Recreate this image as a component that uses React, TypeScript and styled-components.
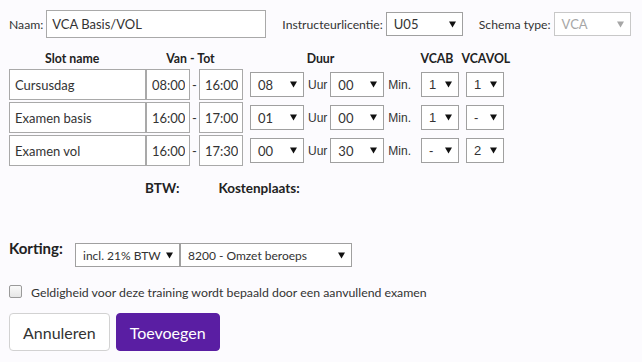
import React from "react";
import styled, { createGlobalStyle } from "styled-components";

const GlobalStyle = createGlobalStyle`
  html, body {
    margin: 0;
    padding: 0;
    background: #fcfbfe;
  }
  body {
    font-family: Lato, "Noto Sans", sans-serif;
    color: #333;
  }
`;

const Page = styled.div`
  width: 642px;
  height: 362px;
  padding: 10px 9px 0;
  box-sizing: border-box;
  display: flex;
  flex-direction: column;
  white-space: nowrap;
`;

const TopRow = styled.div`
  display: flex;
  align-items: center;
  height: 28px;
`;

const Label = styled.span<{ $ml?: number }>`
  font-size: 12.2px;
  color: #333;
  margin-left: ${(p) => p.$ml ?? 0}px;
  margin-right: 3px;
  flex-shrink: 0;
`;

const TextInput = styled.input<{ $w: number; $h?: number }>`
  width: ${(p) => p.$w}px;
  height: ${(p) => p.$h ?? 28}px;
  box-sizing: border-box;
  border: 1px solid #a9a9a9;
  background: #fff;
  padding: 0 4px 0 5px;
  margin: 0;
  font-family: Lato, "Noto Sans", sans-serif;
  font-size: 13px;
  color: #333;
  outline: none;
  flex-shrink: 0;
`;

const SelectBox = styled.div<{
  $w: number;
  $h?: number;
  $fs?: number;
  $disabled?: boolean;
  $arial?: boolean;
}>`
  width: ${(p) => p.$w}px;
  height: ${(p) => p.$h ?? 25}px;
  box-sizing: border-box;
  border: 1px solid ${(p) => (p.$disabled ? "#c8c8c8" : "#a0a0a0")};
  background: #fff;
  display: flex;
  align-items: center;
  justify-content: space-between;
  padding: 0 6px 0 7px;
  font-family: ${(p) => (p.$arial ? '"Liberation Sans", Arial, sans-serif' : 'Lato, "Noto Sans", sans-serif')};
  font-size: ${(p) => p.$fs ?? 13}px;
  color: ${(p) => (p.$disabled ? "#a6a6a6" : "#333")};
  flex-shrink: 0;
  white-space: nowrap;
`;

const Arrow: React.FC<{ disabled?: boolean }> = ({ disabled }) => (
  <svg width="7" height="7" viewBox="0 0 7 7">
    <path d="M0 0.5 L7 0.5 L3.5 6.5 Z" fill={disabled ? "#a6a6a6" : "#111"} />
  </svg>
);

const Select: React.FC<{
  value: string;
  w: number;
  h?: number;
  fs?: number;
  disabled?: boolean;
  arial?: boolean;
}> = ({ value, w, h, fs, disabled, arial }) => (
  <SelectBox $w={w} $h={h} $fs={fs} $disabled={disabled} $arial={arial}>
    <span>{value}</span>
    <Arrow disabled={disabled} />
  </SelectBox>
);

const HeaderRow = styled.div`
  display: flex;
  margin-top: 12px;
  height: 16px;
  align-items: center;
`;

const HeaderCell = styled.span<{ $left: number }>`
  margin-left: ${(p) => p.$left}px;
  font-size: 12.3px;
  font-weight: 700;
  color: #222;
  flex-shrink: 0;
`;

const SlotList = styled.div`
  display: flex;
  flex-direction: column;
  gap: 2px;
  margin-top: 3px;
`;

const SlotRow = styled.div`
  display: flex;
  align-items: center;
  height: 31px;
`;

const Dash = styled.span`
  width: 9px;
  text-align: center;
  font-size: 13px;
  flex-shrink: 0;
`;

const Unit = styled.span<{ $ml: number; $mr: number }>`
  font-family: "Liberation Sans", Arial, sans-serif;
  font-size: 12px;
  color: #333;
  margin-left: ${(p) => p.$ml}px;
  margin-right: ${(p) => p.$mr}px;
  flex-shrink: 0;
`;

const Spacer = styled.span<{ $w: number }>`
  width: ${(p) => p.$w}px;
  flex-shrink: 0;
`;

const TotalsRow = styled.div`
  display: flex;
  margin-top: 14px;
  padding-left: 136px;
  gap: 39px;
`;

const TotalLabel = styled.span`
  font-size: 13.5px;
  font-weight: 700;
  color: #222;
`;

const KortingRow = styled.div`
  display: flex;
  align-items: flex-start;
  margin-top: 47px;
`;

const KortingLabel = styled.span`
  font-size: 15px;
  font-weight: 700;
  color: #222;
  width: 66px;
  margin-top: -4px;
  flex-shrink: 0;
`;

const CheckRow = styled.label`
  display: flex;
  align-items: center;
  margin-top: 18px;
  gap: 9px;
  font-size: 12.3px;
  color: #333;
`;

const CheckBox = styled.span`
  width: 11px;
  height: 11px;
  border: 1px solid #9a9a9a;
  border-radius: 2px;
  background: linear-gradient(#fafafa, #e6e6e6);
  margin-top: -2px;
  flex-shrink: 0;
`;

const ButtonRow = styled.div`
  display: flex;
  gap: 6px;
  margin-top: 13px;
`;

const Button = styled.button<{ $primary?: boolean }>`
  height: 38px;
  padding: 0 13px;
  border-radius: 4px;
  border: 1px solid ${(p) => (p.$primary ? "#5a1ea3" : "#d2d2d2")};
  background: ${(p) => (p.$primary ? "#5a1ea3" : "#fff")};
  color: ${(p) => (p.$primary ? "#fff" : "#333")};
  font-family: Lato, "Noto Sans", sans-serif;
  font-size: 16px;
`;

type Slot = {
  name: string;
  from: string;
  to: string;
  hours: string;
  mins: string;
  vcab: string;
  vcavol: string;
};

const slots: Slot[] = [
  { name: "Cursusdag", from: "08:00", to: "16:00", hours: "08", mins: "00", vcab: "1", vcavol: "1" },
  { name: "Examen basis", from: "16:00", to: "17:00", hours: "01", mins: "00", vcab: "1", vcavol: "-" },
  { name: "Examen vol", from: "16:00", to: "17:30", hours: "00", mins: "30", vcab: "-", vcavol: "2" },
];

export default function App() {
  return (
    <>
      <GlobalStyle />
      <Page>
        <TopRow>
          <Label>Naam:</Label>
          <TextInput $w={220} defaultValue="VCA Basis/VOL" />
          <Label $ml={16}>Instructeurlicentie:</Label>
          <Select value="U05" w={77} h={24} />
          <Label $ml={16}>Schema type:</Label>
          <Select value="VCA" w={77} h={24} disabled />
        </TopRow>

        <HeaderRow>
          <HeaderCell $left={36}>Slot name</HeaderCell>
          <HeaderCell $left={67}>Van - Tot</HeaderCell>
          <HeaderCell $left={92}>Duur</HeaderCell>
          <HeaderCell $left={86}>VCAB</HeaderCell>
          <HeaderCell $left={8}>VCAVOL</HeaderCell>
        </HeaderRow>

        <SlotList>
          {slots.map((s) => (
            <SlotRow key={s.name}>
              <TextInput $w={137} $h={31} defaultValue={s.name} />
              <TextInput $w={44} $h={31} defaultValue={s.from} />
              <Dash>-</Dash>
              <TextInput $w={44} $h={31} defaultValue={s.to} />
              <Spacer $w={7} />
              <Select value={s.hours} w={54} h={25} />
              <Unit $ml={4} $mr={3}>Uur</Unit>
              <Select value={s.mins} w={54} h={25} />
              <Unit $ml={4} $mr={10}>Min.</Unit>
              <Select value={s.vcab} w={38} h={25} arial />
              <Spacer $w={7} />
              <Select value={s.vcavol} w={38} h={25} arial />
            </SlotRow>
          ))}
        </SlotList>

        <TotalsRow>
          <TotalLabel>BTW:</TotalLabel>
          <TotalLabel>Kostenplaats:</TotalLabel>
        </TotalsRow>

        <KortingRow>
          <KortingLabel>Korting:</KortingLabel>
          <Select value="incl. 21% BTW" w={105} h={24} fs={12} />
          <Select value="8200 - Omzet beroeps" w={172} h={24} fs={12} />
        </KortingRow>

        <CheckRow>
          <CheckBox />
          Geldigheid voor deze training wordt bepaald door een aanvullend examen
        </CheckRow>

        <ButtonRow>
          <Button>Annuleren</Button>
          <Button $primary>Toevoegen</Button>
        </ButtonRow>
      </Page>
    </>
  );
}
